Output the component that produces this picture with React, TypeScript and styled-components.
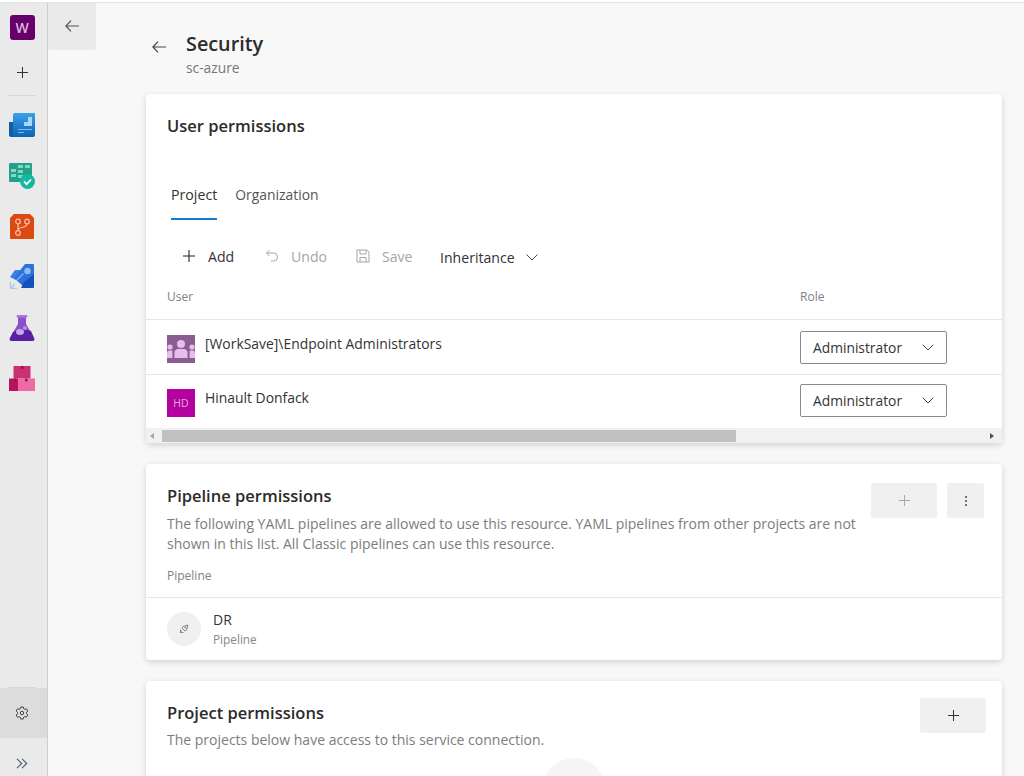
import React from "react";
import styled, { createGlobalStyle } from "styled-components";

const Global = createGlobalStyle`
  html, body { margin: 0; padding: 0; height: 100%; background: #fff; }
  body { font-family: "Open Sans", "Noto Sans", "Liberation Sans", sans-serif; color: #333; }
  * { box-sizing: border-box; }
`;

const Page = styled.div`
  width: 1024px; height: 776px; overflow: hidden; padding-top: 2px; background: #fff;
`;
const Shell = styled.div`
  display: flex; height: 774px; border-top: 1px solid #e4e4e4; background: #f8f8f8;
`;
const Rail = styled.nav`
  width: 48px; flex: none; background: #eaeaea; border-right: 1px solid #cdcdcd;
  display: flex; flex-direction: column; align-items: stretch; padding-top: 9px;
`;
const RailSlot = styled.div<{ $h: number; $active?: boolean; $pt?: number }>`
  height: ${p => p.$h}px; display: flex; align-items: center; justify-content: center;
  padding: ${p => p.$pt ?? 0}px 3px 0 0; flex: none; background: ${p => (p.$active ? "#dcdcdc" : "transparent")};
`;
const OrgBadge = styled.div`
  width: 25px; height: 25px; border-radius: 3px; background: #68006c; color: #dcb6dd;
  font-size: 14px; font-weight: 600; display: flex; align-items: center; justify-content: center;
`;
const RailRule = styled.div<{ $mb?: number }>`
  height: 1px; background: #d4d4d4; margin: 0 12px ${p => p.$mb ?? 0}px 8px; flex: none;
`;
const RailSpacer = styled.div`flex: 1;`;
const BackColumn = styled.div`width: 48px; flex: none;`;
const BackBox = styled.button`
  width: 48px; height: 47px; border: 0; padding: 0 0 2px; background: #eaeaea; border-radius: 0 0 2px 2px;
  display: flex; align-items: center; justify-content: center; color: #555;
`;
const Main = styled.main`
  width: 856px; margin-left: 50px; flex: none; display: flex; flex-direction: column;
`;
const Header = styled.header`
  height: 91px; display: flex; align-items: flex-start; padding: 26px 0 0 6px; gap: 20px; flex: none;
`;
const HeaderBack = styled.div`height: 32px; display: flex; align-items: center; padding-top: 3px; color: #444;`;
const HeaderText = styled.div`display: flex; flex-direction: column;`;
const Title = styled.h1`
  margin: 0; font-size: 19.8px; line-height: 30px; font-weight: 600; color: #2b2b2b;
`;
const Sub = styled.div`font-size: 13.8px; line-height: 17px; color: #777; margin-top: 0;`;
const Card = styled.section<{ $h: number; $mb: number }>`
  height: ${p => p.$h}px; margin-bottom: ${p => p.$mb}px; flex: none; background: #fff;
  border-radius: 4px; box-shadow: 0 2px 6px rgba(0,0,0,.16); position: relative; overflow: hidden;
  display: flex; flex-direction: column;
`;
const CardHead = styled.div`padding: 20px 21px 0; height: 79px; flex: none;`;
const CardTitle = styled.h2`
  margin: 0; font-size: 16.5px; line-height: 24px; font-weight: 600; color: #2b2b2b;
`;
const Tabs = styled.div`display: flex; padding-left: 25px; gap: 18px; height: 47px; flex: none;`;
const Tab = styled.div<{ $on?: boolean }>`
  height: 47px; padding-top: 13px; font-size: ${p => (p.$on ? 14.2 : 13.9)}px; line-height: 18px;
  color: ${p => (p.$on ? "#333" : "#555")}; font-weight: ${p => (p.$on ? 500 : 400)};
  border-bottom: 2px solid ${p => (p.$on ? "#0f7dd4" : "transparent")};
`;
const Toolbar = styled.div`
  height: 74px; flex: none; display: flex; align-items: center; padding: 0 0 2px 36px;
`;
const ToolBtn = styled.div<{ $off?: boolean; $w: number }>`
  width: ${p => p.$w}px; display: flex; align-items: center; gap: 12px; font-size: 14.1px; font-weight: ${p => (p.$off ? 400 : 500)};
  color: ${p => (p.$off ? "#a6a6a6" : "#333")};
`;
const Inherit = styled.div`
  display: flex; align-items: center; gap: 11px; font-size: 14.1px; font-weight: 500; color: #333; padding-top: 2px; margin-left: -1px;
`;
const Grid = styled.div`
  display: grid; grid-template-columns: 654px 1fr; flex: none;
`;
const HeadCell = styled.div<{ $pl: number }>`
  height: 33px; font-size: 12px; color: #808080; font-weight: 500; padding: 3px 0 0 ${p => p.$pl}px; line-height: 14px; border-bottom: 1px solid #e6e6e6;
  margin-top: -7px;
`;
const Row = styled.div`
  display: contents;
`;
const Cell = styled.div<{ $h: number; $last?: boolean; $pb?: number }>`
  height: ${p => p.$h}px; padding-bottom: ${p => p.$pb ?? 0}px; display: flex; align-items: center; border-bottom: ${p => (p.$last ? "0" : "1px solid #e6e6e6")};
`;
const UserCell = styled(Cell)`padding: 0 0 0 21px; gap: 10px; font-size: 13.9px; color: #333;`;
const UserName = styled.span`margin-top: -7px;`;
const GroupAvatar = styled.div`
  width: 28px; height: 28px; background: #8b5e90; display: flex; align-items: center; justify-content: center; margin-top: 3px;
`;
const InitialsAvatar = styled.div`
  width: 28px; height: 28px; background: #b4009e; color: #e3a8da; font-size: 10.5px; display: flex; align-items: center; justify-content: center; margin-top: 3px;
`;
const RoleSelect = styled.div`
  width: 147px; height: 33px; border: 1px solid #8a8a8a; border-radius: 2px; display: flex; align-items: center; justify-content: space-between;
  padding: 0 12px; font-size: 13.8px; color: #333;
`;
const Track = styled.div`
  height: 15px; background: #f1f1f1; flex: none; display: flex; align-items: center; margin-top: auto; padding: 0 8px 0 4px; gap: 8px;
`;
const Thumb = styled.div`width: 574px; height: 12px; background: #c1c1c1;`;
const Arrow = styled.div<{ $right?: boolean }>`
  width: 0; height: 0; border-top: 3.5px solid transparent; border-bottom: 3.5px solid transparent;
  ${p => (p.$right ? "border-left: 4px solid #505050; margin-left: auto;" : "border-right: 4px solid #a3a3a3;")}
`;
const PipelineHead = styled.div`display: flex; padding: 20px 18px 0 21px; height: 102px; flex: none;`;
const PipelineText = styled.div`width: 695px;`;
const Desc = styled.p`margin: 6px 0 0; font-size: 14px; line-height: 20px; color: #7d7d7d;`;
const Actions = styled.div`margin-left: auto; margin-top: -1px; display: flex; gap: 10px;`;
const GreyBtn = styled.button<{ $w: number }>`
  width: ${p => p.$w}px; height: 35px; border: 0; padding: 0; border-radius: 2px; background: #f0f0f0;
  display: flex; align-items: center; justify-content: center;
`;
const ColLabel = styled.div`
  height: 33px; font-size: 12px; font-weight: 500; color: #808080; padding-left: 21px; border-bottom: 1px solid #e6e6e6; line-height: 22px; margin-top: -1px; flex: none;
`;
const PipelineRow = styled.div`display: flex; align-items: center; padding: 0 0 0 21px; gap: 12px; flex: 1; `;
const Circle = styled.div`
  width: 34px; height: 34px; border-radius: 50%; background: #f0f0f0; display: flex; align-items: center; justify-content: center;
`;
const PName = styled.div`font-size: 14px; line-height: 18px; color: #333;`;
const PType = styled.div`font-size: 11.8px; line-height: 15px; color: #888; margin-top: 3px;`;
const ProjectHead = styled.div`display: flex; padding: 20px 16px 0 21px;`;
const ProjectText = styled.div`flex: 1;`;
const ProjectDesc = styled.p`margin: 6px 0 0; font-size: 14px; line-height: 18px; color: #7d7d7d;`;
const ProjectBtnSlot = styled.div`margin-top: -3px;`;
const GhostCircle = styled.div`
  width: 62px; height: 62px; border-radius: 50%; background: #f5f5f5; position: absolute; left: 397px; top: 77px;
`;

const Plus = ({ s = 14, c = "#333" }: { s?: number; c?: string }) => (
  <svg width={s} height={s} viewBox="0 0 14 14"><path d="M7 1v12M1 7h12" stroke={c} strokeWidth="1.1" fill="none" /></svg>
);
const Chevron = () => (
  <svg width="12" height="7" viewBox="0 0 12 7"><path d="M.7.7L6 6l5.300-5.300" stroke="#444" strokeWidth="1" fill="none" /></svg>
);
const ArrowLeft = () => (
  <svg width="14" height="12" viewBox="0 0 14 12"><path d="M6 .7L.9 6 6 11.300M1 6h13" stroke="currentColor" strokeWidth="1.2" fill="none" /></svg>
);
const BoardsIcon = () => (
  <svg width="26" height="25" viewBox="0 0 26 25">
    <path d="M0 9h6v15H2a2 2 0 0 1-2-2z" fill="#0f5fa8" />
    <path d="M4 2a2 2 0 0 1 2-2h20v22a2 2 0 0 1-2 2H4z" fill="url(#bd)" />
    <defs><linearGradient id="bd" x1="0" y1="0" x2="0" y2="1"><stop offset="0" stopColor="#3ca0ea" /><stop offset="1" stopColor="#0b63b5" /></linearGradient></defs>
    <path d="M9 13h6V9h4V4h4v9H9z" fill="#a9d7f7" /><path d="M9 16h14v1H9zM9 19h6v1H9z" fill="#7cbcec" />
  </svg>
);
const TestBoardIcon = () => (
  <svg width="26" height="26" viewBox="0 0 26 26">
    <rect x="0" y="0" width="23" height="19" rx="1" fill="#23a08a" />
    <path d="M2 6h5v3H2zM9 2h5v3H9zM16 2h5v3h-5zM2 11h5v3H2zM9 7h5v3H9zM9 12h5v3H9z" fill="#7fd7c4" />
    <circle cx="18.500" cy="18.500" r="7.500" fill="#14b8a0" />
    <path d="M15 18.500l2.600 2.600 4.400-4.600" stroke="#fff" strokeWidth="1.800" fill="none" />
  </svg>
);
const ReposIcon = () => (
  <svg width="24" height="25" viewBox="0 0 24 25">
    <path d="M4 0h16l4 4v20a1 1 0 0 1-1 1H1a1 1 0 0 1-1-1V4z" fill="#dc4a12" />
    <g stroke="#f9c4ab" strokeWidth="1.200" fill="none"><circle cx="8" cy="7.500" r="2.300" /><circle cx="17" cy="7.500" r="2.300" /><circle cx="8" cy="19" r="2.300" /><path d="M8 10v6.500M17 10c0 4.500-9 2-9 6.500" /></g>
  </svg>
);
const PipelinesIcon = () => (
  <svg width="26" height="25" viewBox="0 0 26 25">
    <path d="M1 13l5-7h9L7 16z" fill="#3b81e6" />
    <path d="M16 0h8a1 1 0 0 1 1 1v10L14 22 5 14z" fill="#2d72dc" />
    <path d="M25 10v13a1 1 0 0 1-1 1H12l3-6z" fill="#1451b8" />
    <circle cx="18.500" cy="7" r="3.200" fill="#8cbcf3" /><path d="M8 16l6.500-6.500" stroke="#7cadf0" strokeWidth="1.400" />
    <path d="M1.500 18v6.500H8M2 24l4-4" stroke="#a6c9f4" strokeWidth="1.300" fill="none" />
  </svg>
);
const FlaskIcon = () => (
  <svg width="26" height="26" viewBox="0 0 26 26">
    <path d="M9 1h8v8l8 14a2 2 0 0 1-2 3H3a2 2 0 0 1-2-3l8-14z" fill="#8a4fc9" />
    <path d="M4 17c6-3 12-3 18-1l3 7a2 2 0 0 1-2 3H3a2 2 0 0 1-2-3z" fill="#5a1fa5" />
    <rect x="7.500" y="0" width="11" height="2.400" rx="1" fill="#a97ad9" />
    <ellipse cx="11" cy="17" rx="4" ry="3" fill="#c5a7ea" /><circle cx="16" cy="13" r="2" fill="#b78fe3" />
  </svg>
);
const ArtifactsIcon = () => (
  <svg width="26" height="25" viewBox="0 0 26 25">
    <rect x="4.500" y="0" width="17" height="12.500" fill="#cc2e72" />
    <rect x="0" y="12.500" width="9" height="12.500" fill="#b8135e" />
    <rect x="9" y="12.500" width="17" height="12.500" fill="#ee6aa6" />
    <path d="M12 0h2.500v3H12zM5 12.500h2v3H5zM16 12.500h2.500v3H16z" fill="#8f1850" />
  </svg>
);
const Gear = () => (
  <svg width="14" height="14" viewBox="0 0 14 14">
    <path d="M5.700 1h2.600l.4 1.700 1.100.6 1.700-.5 1.300 2.200-1.300 1.300v1.300l1.300 1.200-1.300 2.300-1.700-.5-1.100.6L8.300 13H5.700l-.4-1.700-1.100-.6-1.700.5L1.200 9l1.300-1.300V6.400L1.200 5.100l1.300-2.300 1.700.5 1.100-.6z" fill="none" stroke="#444" strokeWidth="1" />
    <circle cx="7" cy="7" r="1.700" fill="none" stroke="#444" />
  </svg>
);
const Expand = () => (
  <svg width="12" height="11" viewBox="0 0 12 11"><path d="M1 .8l4.700 4.700L1 10.200M6 .8l4.700 4.700L6 10.200" stroke="#56627a" strokeWidth="1.200" fill="none" /></svg>
);
const UndoIcon = () => (
  <svg width="14" height="14" viewBox="0 0 14 14"><path d="M4.500 1L1.500 4l3 3M1.500 4h7a4 4 0 0 1 0 8H6" stroke="#a6a6a6" strokeWidth="1" fill="none" /></svg>
);
const SaveIcon = () => (
  <svg width="14" height="14" viewBox="0 0 14 14"><path d="M1 1h10l2 2v10H1zM4 1v4h6V1M4 13V8.500h6V13" stroke="#a6a6a6" strokeWidth="1" fill="none" /></svg>
);
const GroupIcon = () => (
  <svg width="28" height="28" viewBox="0 0 28 28">
    <g fill="#e6bdec">
      <circle cx="14" cy="9" r="4" /><path d="M7.500 23v-5a4 4 0 0 1 4-4h5a4 4 0 0 1 4 4v5z" />
      <circle cx="3" cy="12" r="2.600" /><circle cx="25" cy="12" r="2.600" />
      <path d="M0 23v-5a2.500 2.500 0 0 1 2-2.500h3.400V23zM28 23v-5a2.500 2.500 0 0 0-2-2.500h-3.400V23z" />
    </g>
  </svg>
);
const Rocket = () => (
  <svg width="10" height="10" viewBox="0 0 10 10"><path d="M3 4l1-1.500L9 1l-1.500 5L6 7zM3 6.500L1 9M1.500 5.500v3h3" stroke="#888" strokeWidth="1" fill="none" /><circle cx="6.500" cy="3.500" r="1" fill="#888" /></svg>
);
const Dots = () => (
  <svg width="4" height="12" viewBox="0 0 4 12"><g fill="#555"><circle cx="2" cy="2" r="1.100" /><circle cx="2" cy="6" r="1.100" /><circle cx="2" cy="10" r="1.100" /></g></svg>
);

export default function App() {
  return (
    <Page>
      <Global />
      <Shell>
        <Rail>
          <RailSlot $h={30}><OrgBadge>W</OrgBadge></RailSlot>
          <RailSlot $h={53} $pt={7}><Plus s={13} /></RailSlot>
          <RailRule $mb={4} />
          <RailSlot $h={51}><BoardsIcon /></RailSlot>
          <RailSlot $h={50}><TestBoardIcon /></RailSlot>
          <RailSlot $h={50}><ReposIcon /></RailSlot>
          <RailSlot $h={51}><PipelinesIcon /></RailSlot>
          <RailSlot $h={51}><FlaskIcon /></RailSlot>
          <RailSlot $h={50}><ArtifactsIcon /></RailSlot>
          <RailSpacer />
          <RailRule />
          <RailSlot $h={50} $active><Gear /></RailSlot>
          <RailSlot $h={38} $pt={12}><Expand /></RailSlot>
        </Rail>
        <BackColumn><BackBox aria-label="Back"><ArrowLeft /></BackBox></BackColumn>
        <Main>
          <Header>
            <HeaderBack><ArrowLeft /></HeaderBack>
            <HeaderText>
              <Title>Security</Title>
              <Sub>sc-azure</Sub>
            </HeaderText>
          </Header>
          <Card $h={349} $mb={21}>
            <CardHead><CardTitle>User permissions</CardTitle></CardHead>
            <Tabs>
              <Tab $on>Project</Tab>
              <Tab>Organization</Tab>
            </Tabs>
            <Toolbar>
              <ToolBtn $w={83}><Plus s={14} c="#222" />Add</ToolBtn>
              <ToolBtn $w={91} $off><UndoIcon />Undo</ToolBtn>
              <ToolBtn $w={85} $off><SaveIcon />Save</ToolBtn>
              <Inherit>Inheritance <Chevron /></Inherit>
            </Toolbar>
            <Grid>
              <HeadCell $pl={21}>User</HeadCell>
              <HeadCell $pl={0}>Role</HeadCell>
              <Row>
                <UserCell $h={55}><GroupAvatar><GroupIcon /></GroupAvatar><UserName>[WorkSave]\Endpoint Administrators</UserName></UserCell>
                <Cell $h={55}><RoleSelect>Administrator <Chevron /></RoleSelect></Cell>
              </Row>
              <Row>
                <UserCell $h={52} $last><InitialsAvatar>HD</InitialsAvatar><UserName>Hinault Donfack</UserName></UserCell>
                <Cell $h={52} $pb={2} $last><RoleSelect>Administrator <Chevron /></RoleSelect></Cell>
              </Row>
            </Grid>
            <Track><Arrow /><Thumb /><Arrow $right /></Track>
          </Card>
          <Card $h={196} $mb={21}>
            <PipelineHead>
              <PipelineText>
                <CardTitle>Pipeline permissions</CardTitle>
                <Desc>The following YAML pipelines are allowed to use this resource. YAML pipelines from other projects are not shown in this list. All Classic pipelines can use this resource.</Desc>
              </PipelineText>
              <Actions>
                <GreyBtn $w={66}><Plus s={13} c="#a8a8a8" /></GreyBtn>
                <GreyBtn $w={37}><Dots /></GreyBtn>
              </Actions>
            </PipelineHead>
            <ColLabel>Pipeline</ColLabel>
            <PipelineRow>
              <Circle><Rocket /></Circle>
              <div><PName>DR</PName><PType>Pipeline</PType></div>
            </PipelineRow>
          </Card>
          <Card $h={200} $mb={0}>
            <ProjectHead>
              <ProjectText>
                <CardTitle>Project permissions</CardTitle>
                <ProjectDesc>The projects below have access to this service connection.</ProjectDesc>
              </ProjectText>
              <ProjectBtnSlot><GreyBtn $w={66}><Plus s={13} c="#333" /></GreyBtn></ProjectBtnSlot>
            </ProjectHead>
            <GhostCircle />
          </Card>
        </Main>
      </Shell>
    </Page>
  );
}
